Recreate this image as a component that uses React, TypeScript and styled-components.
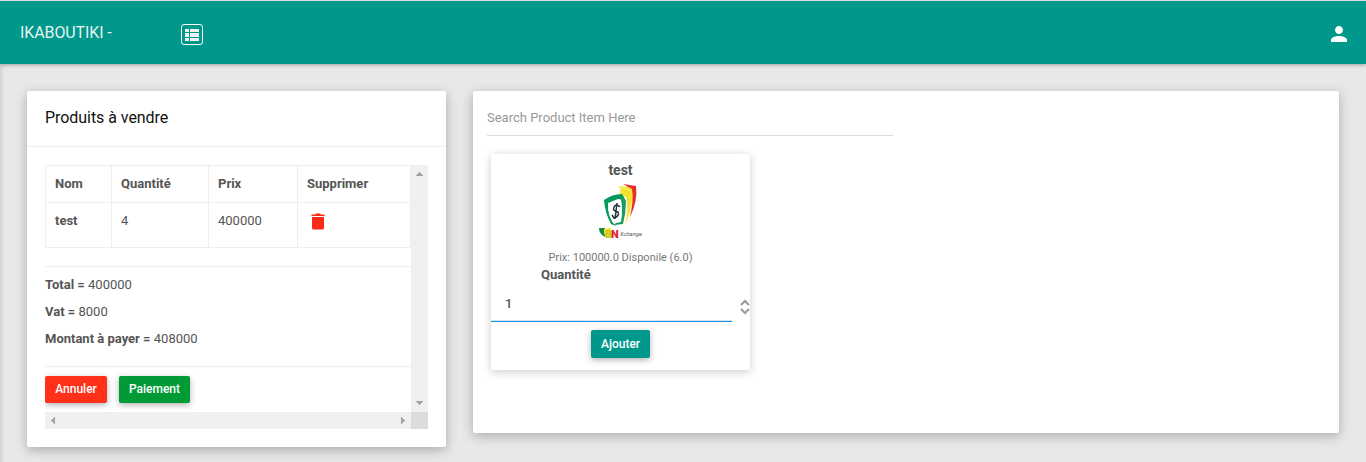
import React from "react";
import styled, { createGlobalStyle } from "styled-components";

const GlobalStyle = createGlobalStyle`
  * { box-sizing: border-box; }
  html, body { margin: 0; height: 100%; overflow: hidden; }
  body {
    background: #e8e8e8;
    color: #555;
    font: 400 13px/20px Roboto, "Liberation Sans", sans-serif;
  }
  button { font-family: inherit; }
`;

const Page = styled.div`
  height: 462px;
  display: flex;
  flex-direction: column;
  overflow: hidden;
`;

const TopBar = styled.header`
  flex: none;
  display: flex;
  align-items: center;
  height: 64px;
  padding: 1px 20px 0;
  position: relative;
  z-index: 1;
  border-top: 1px solid #dcdcdc;
  background: #00988b;
  color: #fff;
  box-shadow: 0 1px 4px rgba(0, 0, 0, 0.3);
`;

const Brand = styled.div`
  width: 161px;
  font-size: 16px;
  color: rgba(255, 255, 255, 0.92);
  letter-spacing: -0.1px;
`;

const MenuButton = styled.button`
  width: 22px;
  height: 21px;
  margin-top: 3px;
  padding: 0;
  display: grid;
  place-items: center;
  border: 1px solid #fff;
  border-radius: 3px;
  background: transparent;
`;

const UserIcon = styled.svg`
  margin-left: auto;
  margin-right: -1px;
  margin-top: 2px;
`;

const Content = styled.main`
  display: flex;
  align-items: flex-start;
  gap: 27px;
  flex: 1;
  padding: 27px;
  box-shadow: inset 3px 0 4px -2px rgba(0, 0, 0, 0.14);
`;

const Card = styled.section<{ $w: number; $h: number }>`
  flex: none;
  width: ${(p) => p.$w}px;
  height: ${(p) => p.$h}px;
  border-radius: 2px;
  background: #fff;
  box-shadow: 0 3px 12px rgba(0, 0, 0, 0.27);
`;

const CardTitle = styled.h2`
  margin: 0;
  height: 56px;
  padding: 15px 18px 0;
  border-bottom: 1px solid #eee;
  color: #111;
  font-size: 16px;
  font-weight: 400;
  line-height: 24px;
  letter-spacing: -0.05px;
`;

const ScrollFrame = styled.div`
  display: grid;
  grid-template: 247px 17px / 366px 17px;
  margin: 18px 18px 0;
`;

const ScrollBody = styled.div`
  overflow: hidden;
`;

const Track = styled.div<{ $vertical?: boolean }>`
  display: flex;
  flex-direction: ${(p) => (p.$vertical ? "column" : "row")};
  align-items: center;
  justify-content: space-between;
  padding: ${(p) => (p.$vertical ? "7px 0" : "0 6px")};
  background: #f0f0f0;
`;

const Corner = styled.div`
  background: #dcdcdc;
`;

const Table = styled.table`
  width: 366px;
  table-layout: fixed;
  border-collapse: separate;
  border-spacing: 0;
  border-top: 1px solid #eee;
  border-left: 1px solid #eee;
`;

const Cell = styled.td<{ $strong?: boolean; $h: number }>`
  height: ${(p) => p.$h}px;
  padding: 8px 9px;
  vertical-align: top;
  text-align: left;
  border-right: 1px solid #eee;
  border-bottom: 1px solid #eee;
  font-weight: ${(p) => (p.$strong ? 700 : 400)};
`;

const TrashIcon = styled.svg`
  display: block;
  margin: 1px 0 0 1px;
`;

const Totals = styled.div`
  height: 101px;
  margin-top: 18px;
  padding-top: 8px;
  border-top: 1px solid #eee;
  border-bottom: 1px solid #eee;
`;

const Line = styled.p`
  margin: 0 0 7px;
  white-space: pre;
`;

const Actions = styled.div`
  display: flex;
  gap: 12px;
  padding-top: 9px;
`;

const Button = styled.button<{ $bg: string; $w: number; $h?: number }>`
  width: ${(p) => p.$w}px;
  height: ${(p) => p.$h ?? 27}px;
  padding: 0 0 1px;
  border: 0;
  border-radius: 2px;
  background: ${(p) => p.$bg};
  color: #fff;
  font-size: 12px;
  font-weight: 500;
  line-height: 18px;
  box-shadow: 0 2px 6px rgba(0, 0, 0, 0.3);
`;

const SearchInput = styled.input`
  display: block;
  width: 406px;
  height: 34px;
  margin: 11px 0 0 14px;
  padding: 0 0 2px;
  border: 0;
  border-bottom: 1px solid #dcdcdc;
  outline: 0;
  font: 400 13px Roboto, sans-serif;
  &::placeholder { color: #999; opacity: 1; }
`;

const Product = styled.article`
  display: flex;
  flex-direction: column;
  align-items: center;
  width: 259px;
  height: 216px;
  margin: 18px 0 0 18px;
  padding-top: 6px;
  border-radius: 2px;
  box-shadow: 0 2px 10px rgba(0, 0, 0, 0.2);
`;

const ProductName = styled.h3`
  margin: 0;
  font-size: 14px;
  line-height: 20px;
  font-weight: 700;
`;

const Logo = styled.svg`
  display: block;
  margin-top: 2px;
`;

const Price = styled.div`
  margin-top: 8px;
  color: #777;
  font-size: 11px;
  line-height: 16px;
`;

const QuantityLabel = styled.label`
  align-self: flex-start;
  margin: -1px 0 0 50px;
  font-weight: 700;
`;

const QuantityRow = styled.div`
  align-self: stretch;
  display: flex;
  justify-content: space-between;
  height: 37px;
`;

const QuantityValue = styled.div`
  width: 241px;
  padding: 9px 14px 0;
  border-bottom: 1px solid #0288d1;
  border-bottom-color: #1490e4;
  box-shadow: inset 0 -1px #dbe6ed;
  font-weight: 500;
`;

const Stepper = styled.svg`
  margin-top: 14px;
`;

const AddSlot = styled.div`
  margin-top: 8px;
`;

type Direction = "up" | "down" | "left" | "right";
const arrowPaths: Record<Direction, string> = {
  up: "M0 4h7v-1h-1v-1h-1v-1h-1v-1h-1v1h-1v1h-1v1h-1z",
  down: "M0 0h7v1h-1v1h-1v1h-1v1h-1v-1h-1v-1h-1v-1h-1z",
  left: "M4 0v7h-1v-1h-1v-1h-1v-1h-1v-1h1v-1h1v-1h1v-1z",
  right: "M0 0v7h1v-1h1v-1h1v-1h1v-1h-1v-1h-1v-1h-1v-1z",
};

function Arrow({ dir }: { dir: Direction }) {
  const vertical = dir === "up" || dir === "down";
  return (
    <svg width={vertical ? 7 : 4} height={vertical ? 4 : 7} fill="#a3a3a3">
      <path d={arrowPaths[dir]} />
    </svg>
  );
}

function ProductLogo() {
  return (
    <Logo width="50" height="60" viewBox="0 0 50 60" role="img" aria-label="BN Xchange">
      <path d="M24 8 33 9Q37 25 29 43Q33 24 30 15L24 14Z" fill="#f5e642" />
      <path d="M25 8 35 9 30 15 23 13Z" fill="#f5e642" />
      <path d="M22 4 34 9Q37 24 31 41Q34 23 30 13Z" fill="#f2e22a" />
      <path d="M24 2 35 5Q37 23 31 40Q42 24 38 6L28 3Z" fill="#fff" />
      <path d="M23 4 37 5Q40 20 33 38Q38 22 33 8Z" fill="#f5e535" />
      <path d="M27 2 40 4Q42 19 34 35Q38 18 36 7Z" fill="#e72c32" />
      <path d="M10 17 24 12 28 19Q30 31 27 42L21 48Q12 39 10 17Z" fill="#fff" />
      <path d="M8 18Q16 12 26 12L29 18 22 17 12 21Q11 36 20 44L15 42Q9 31 8 18Z" fill="#07985e" />
      <path d="M26 12 30 19Q30 31 27 42L18 43 20 41 25 40Q27 29 25 17Z" fill="#169b61" />
      <path d="M21 21 19 37M24 25Q20 21 18 25T22 30Q24 34 18 36L16 33" fill="none" stroke="#28313a" strokeWidth="1.5" />
      <path d="M3 46h6v9Q3 52 3 46Z" fill="#168847" />
      <path d="M8 47 15 46 16 56Q9 56 8 51Z" fill="#f3eb17" />
      <text x="9" y="55.5" fontFamily="Roboto" fontSize="10" fontWeight="900" fill="#c8c42c">B</text>
      <text x="15" y="56" fontFamily="Roboto" fontSize="11" fontWeight="900" fill="#e52029">N</text>
      <text x="24" y="54" fontFamily="Roboto" fontSize="5.5" fontStyle="italic" fill="#555" textLength="22" lengthAdjust="spacingAndGlyphs">Xchange</text>
    </Logo>
  );
}

export default function App() {
  return (
    <Page>
      <GlobalStyle />
      <TopBar>
        <Brand>IKABOUTIKI -</Brand>
        <MenuButton aria-label="Menu">
          <svg width="14" height="12" fill="#f2f2f2">
            <path d="M0 0h4v3H0zM5 0h9v3H5zM0 4h4v4H0zM5 4h9v4H5zM0 9h4v3H0zM5 9h9v3H5z" />
          </svg>
        </MenuButton>
        <UserIcon width="24" height="24" viewBox="0 0 24 24" fill="#fff" transform="translate(4 0)">
          <path d="M12 12c2.21 0 4-1.79 4-4s-1.79-4-4-4-4 1.79-4 4 1.79 4 4 4zm0 2c-2.67 0-8 1.34-8 4v2h16v-2c0-2.66-5.33-4-8-4z" />
        </UserIcon>
      </TopBar>
      <Content>
        <Card $w={419} $h={356}>
          <CardTitle>Produits à vendre</CardTitle>
          <ScrollFrame>
            <ScrollBody>
              <Table>
                <colgroup>
                  <col style={{ width: 66 }} />
                  <col style={{ width: 97 }} />
                  <col style={{ width: 89 }} />
                  <col />
                </colgroup>
                <tbody>
                  <tr>
                    {["Nom", "Quantité", "Prix", "Supprimer"].map((name) => (
                      <Cell as="th" $strong $h={37} key={name}>{name}</Cell>
                    ))}
                  </tr>
                  <tr>
                    <Cell $strong $h={45}>test</Cell>
                    <Cell $h={45}>4</Cell>
                    <Cell $h={45}>400000</Cell>
                    <Cell $h={45}>
                      <TrashIcon width="20" height="20" viewBox="0 0 20 20" fill="#ff2b17">
                        <path d="M4 5h12v11q0 1.500-1.500 1.500h-9Q4 17.500 4 16z" />
                        <path d="M3.500 2.500H7L8 1.500h4l1 1h3.500V4h-13z" />
                      </TrashIcon>
                    </Cell>
                  </tr>
                </tbody>
              </Table>
              <Totals>
                <Line><b>Total = </b>400000</Line>
                <Line><b>Vat = </b>8000</Line>
                <Line><b>Montant à payer = </b>408000</Line>
              </Totals>
              <Actions>
                <Button $bg="#ff311b" $w={62}>Annuler</Button>
                <Button $bg="#009a36" $w={71}>Paiement</Button>
              </Actions>
            </ScrollBody>
            <Track $vertical><Arrow dir="up" /><Arrow dir="down" /></Track>
            <Track><Arrow dir="left" /><Arrow dir="right" /></Track>
            <Corner />
          </ScrollFrame>
        </Card>
        <Card $w={866} $h={342}>
          <SearchInput placeholder="Search Product Item Here" />
          <Product>
            <ProductName>test</ProductName>
            <ProductLogo />
            <Price>Prix: 100000.0 Disponile (6.0)</Price>
            <QuantityLabel>Quantité</QuantityLabel>
            <QuantityRow>
              <QuantityValue>1</QuantityValue>
              <Stepper width="10" height="16" fill="none" stroke="#999" strokeWidth="2">
                <path d="M1 6 5 2 9 6M1 10 5 14 9 10" />
              </Stepper>
            </QuantityRow>
            <AddSlot><Button $bg="#00988b" $w={59} $h={28}>Ajouter</Button></AddSlot>
          </Product>
        </Card>
      </Content>
    </Page>
  );
}
